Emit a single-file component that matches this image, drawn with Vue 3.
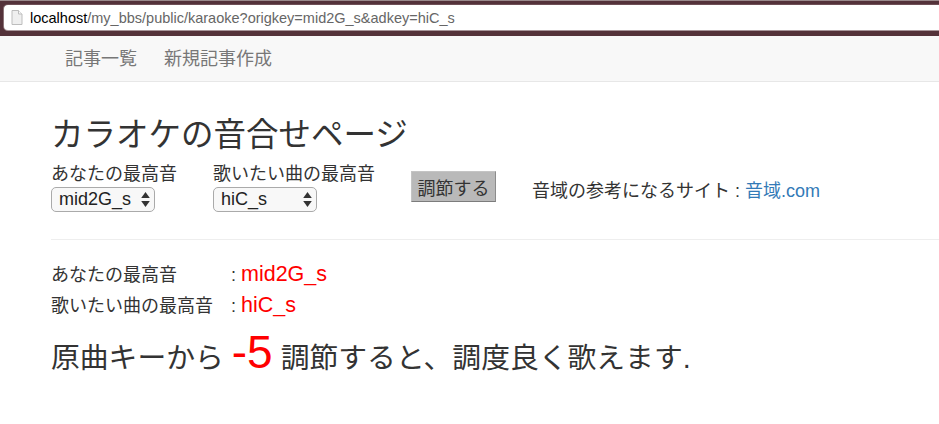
<script setup>
const pickers = [
  { label: 'あなたの最高音', value: 'mid2G_s', width: '104px' },
  { label: '歌いたい曲の最高音', value: 'hiC_s', width: '104px' },
]
</script>

<template>
  <div class="page">
    <div class="chrome">
      <div class="urlbar">
        <svg class="fileicon" width="12" height="15" viewBox="0 0 12 15">
          <path d="M1 .5h6.500L11 4v10.500H1z" fill="#efefef" stroke="#bdbdbd" />
          <path d="M7.500 .5V4H11" fill="#fafafa" stroke="#bdbdbd" />
        </svg>
        <span class="host">localhost</span><span class="path">/my_bbs/public/karaoke?origkey=mid2G_s&amp;adkey=hiC_s</span>
      </div>
    </div>
    <nav class="nav">
      <a>記事一覧</a>
      <a>新規記事作成</a>
    </nav>
    <main class="main">
      <h1>カラオケの音合せページ</h1>
      <form class="form" @submit.prevent>
        <div v-for="p in pickers" :key="p.label" class="picker">
          <label>{{ p.label }}</label>
          <div class="select" :style="{ width: p.width }">
            <span>{{ p.value }}</span>
            <svg class="arrows" width="9" height="15" viewBox="0 0 9 15">
              <path d="M4.500 0L8.800 6H.2z" fill="#333" />
              <path d="M4.500 15L8.800 9H.2z" fill="#333" />
            </svg>
          </div>
        </div>
        <button type="button" class="submit">調節する</button>
        <p class="ref">音域の参考になるサイト : <a>音域.com</a></p>
      </form>
      <hr />
      <div class="row first"><span class="key">あなたの最高音</span><span class="colon">:</span><span class="val">mid2G_s</span></div>
      <div class="row"><span class="key">歌いたい曲の最高音</span><span class="colon">:</span><span class="val">hiC_s</span></div>
      <p class="result">原曲キーから <span class="num">-5</span> 調節すると、調度良く歌えます.</p>
    </main>
  </div>
</template>

<style>
html, body { margin: 0; background: #fff; }
</style>

<style scoped>
.page {
  width: 939px;
  height: 424px;
  overflow: hidden;
  font-family: "Liberation Sans", "Noto Sans CJK JP", sans-serif;
  color: #333;
}
.chrome {
  background: #54323a;
  border-top: 1px solid #9a8a8c;
  padding: 4px 0 6px;
  height: 36px;
  box-sizing: border-box;
}
.urlbar {
  height: 25px;
  margin-left: 4px;
  background: #fff;
  border-radius: 4px 0 0 4px;
  display: flex;
  align-items: center;
  font-size: 14.500px;
  box-sizing: border-box;
  padding-left: 7px;
  box-shadow: 0 1px 0 #a8969a, 0 -1px 0 #6e4f56, -1px 0 0 #8c7478;
}
.fileicon { margin-right: 7px; flex: none; }
.host { color: #000; }
.path { color: #666; }
.nav {
  height: 46px;
  box-sizing: border-box;
  background: #f8f8f8;
  border-bottom: 1px solid #e7e7e7;
  display: flex;
  align-items: center;
  gap: 27px;
  padding: 0 0 3px 65px;
  font-size: 18px;
  color: #777;
}
.main { padding-left: 51px; }
h1 {
  margin: 33px 0 0;
  font-size: 32.500px;
  font-weight: 400;
  line-height: 40px;
}
.form { display: flex; align-items: flex-start; margin-top: 7px; height: 77px; }
.picker { display: flex; flex-direction: column; margin-right: 36px; }
.picker label { font-size: 18px; line-height: 25px; }
.select {
  height: 25px;
  box-sizing: border-box;
  border: 1px solid #aaa;
  border-radius: 5px;
  background: #f8f8f8;
  font-size: 18px;
  line-height: 23px;
  padding-left: 7px;
  color: #222;
  position: relative;
}
.arrows { position: absolute; right: 4px; top: 4px; }
.submit {
  margin: 9px 0 0 0;
  width: 85px;
  height: 31px;
  padding: 0;
  font: inherit;
  font-size: 18px;
  color: #333;
  background: #b9b9b9;
  border: 1px solid #c4c4c4;
  border-bottom-color: #7c7c7c;
  border-right-color: #8c8c8c;
}
.ref { margin: 16px 0 0 36px; font-size: 18px; line-height: 26px; }
.ref a { color: #337ab7; }
hr {
  border: 0;
  border-top: 1px solid #eee;
  margin: 0;
}
.row { display: flex; align-items: baseline; font-size: 18px; height: 31px; line-height: 31px; }
.first { margin-top: 19px; }
.key { width: 180px; }
.colon { width: 10px; }
.val { color: #f00; font-size: 21.500px; }
.result { margin: 7px 0 0; font-size: 28.800px; line-height: 48px; }
.num { color: #f00; font-size: 46px; line-height: 48px; }
</style>
